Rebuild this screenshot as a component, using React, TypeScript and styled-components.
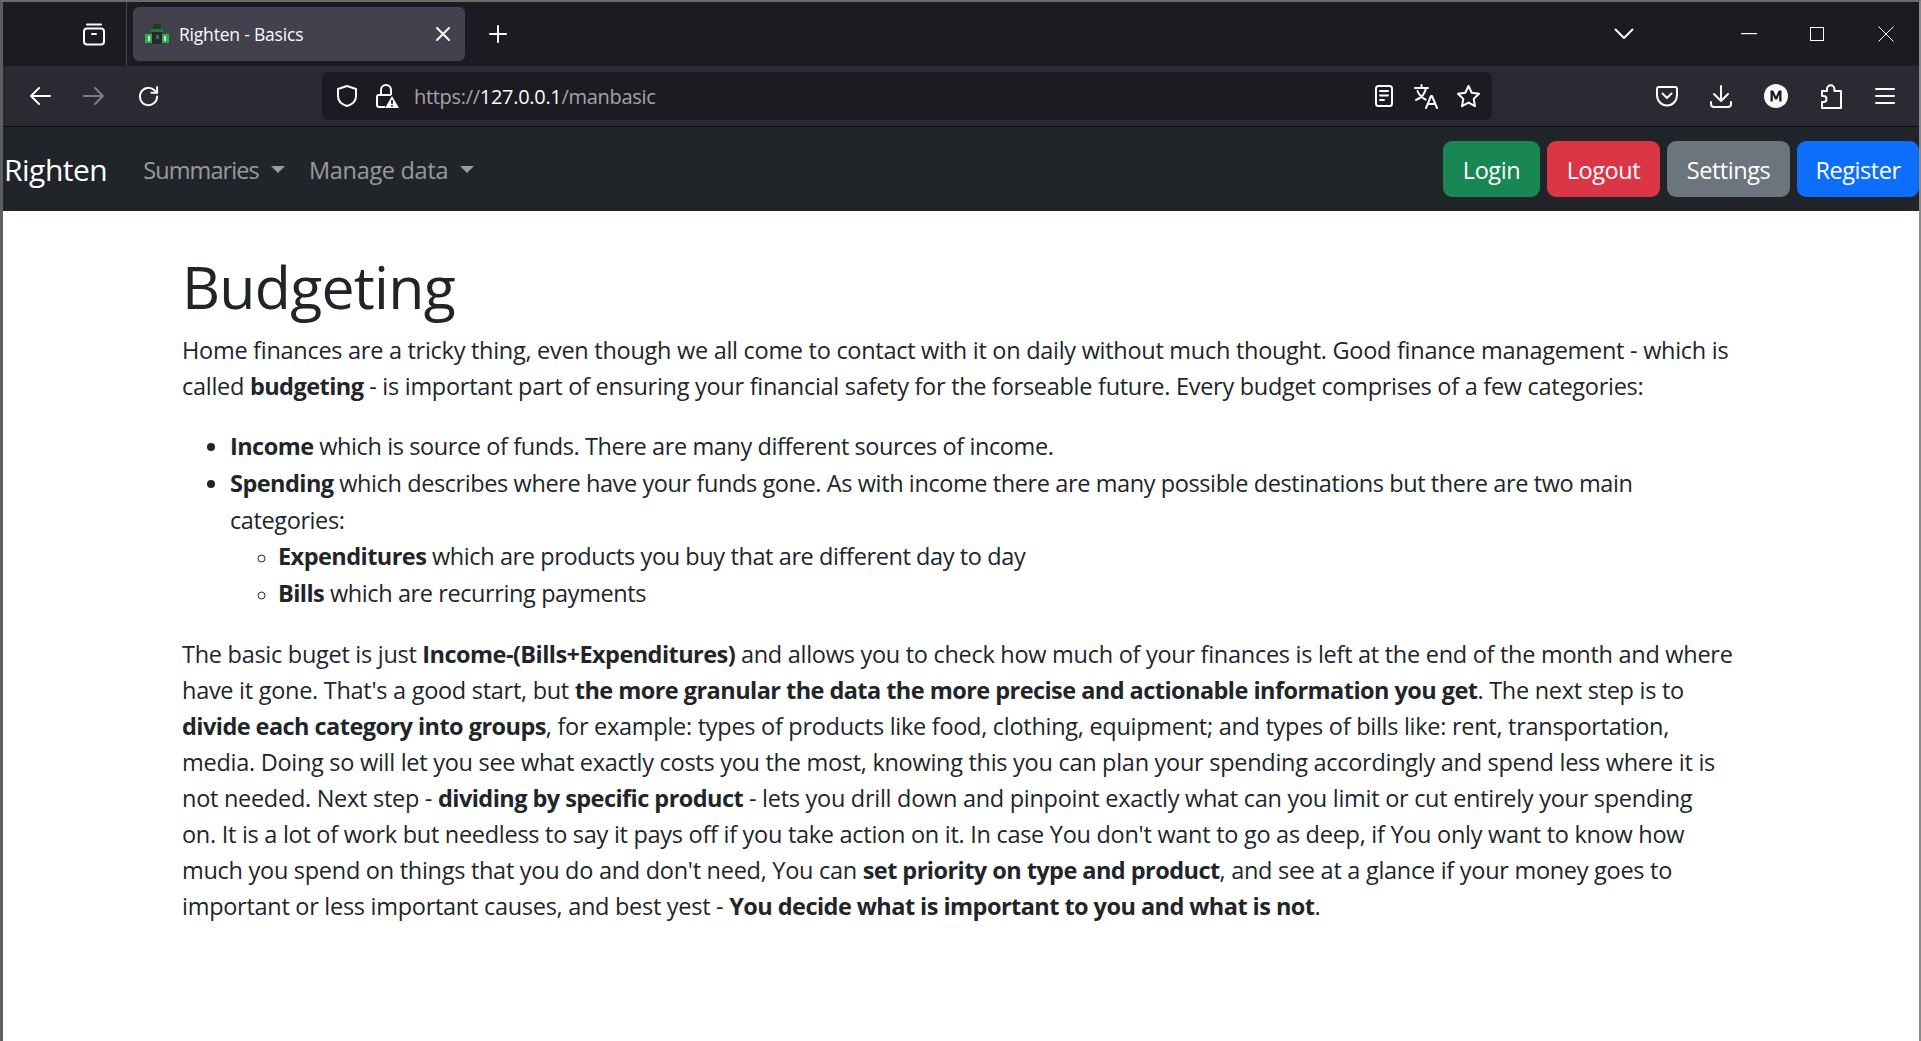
import React from 'react';
import styled, { createGlobalStyle } from 'styled-components';

const GlobalStyle = createGlobalStyle`
    html, body {
        margin: 0;
        padding: 0;
        background: #fff;
    }
    body {
        font-family: "Open Sans", "Noto Sans", sans-serif;
        color: #212529;
    }
`;

const Janela = styled.div`
    width: 1921px;
    height: 1041px;
    overflow: hidden;
    box-sizing: border-box;
    border-top: 2px solid #6b6b6b;
    border-left: 3px solid #5f5f5f;
    border-right: 2px solid #8a8a8a;
    display: flex;
    flex-direction: column;
`;

const BarraAbas = styled.div`
    height: 64px;
    flex: none;
    background: #1c1b22;
    display: flex;
    align-items: center;
    color: #fbfbfe;
`;

const Slot = styled.div<{ $w: number; $ml?: number }>`
    width: ${p => p.$w}px;
    margin-left: ${p => p.$ml ?? 0}px;
    flex: none;
    display: flex;
    align-items: center;
    justify-content: center;
    color: #fbfbfe;
`;

const Separador = styled.div`
    width: 1px;
    align-self: stretch;
    background: #4a4950;
    margin-left: 20px;
`;

const Aba = styled.div`
    width: 332px;
    height: 54px;
    margin-left: 6px;
    box-sizing: border-box;
    padding: 0 15px 0 11px;
    background: #42414d;
    border-radius: 6px;
    display: flex;
    align-items: center;
    flex: none;
`;

const TituloAba = styled.span`
    font-size: 17.5px;
    letter-spacing: -0.2px;
    margin-left: 9px;
    flex: 1;
`;

const BarraFerramentas = styled.div`
    height: 60px;
    flex: none;
    background: #2b2a33;
    border-bottom: 1px solid #0c0c0d;
    display: flex;
    align-items: center;
`;

const CampoUrl = styled.div`
    width: 1170px;
    height: 48px;
    margin-left: 162px;
    padding-right: 11px;
    box-sizing: border-box;
    flex: none;
    background: #1c1b22;
    border-radius: 6px;
    display: flex;
    align-items: center;
`;

const TextoUrl = styled.div`
    font-size: 20px;
    letter-spacing: -0.3px;
    color: #a4a3a9;
    margin-left: 15px;
    padding-top: 1px;
    flex: 1;

    b {
        font-weight: 400;
        color: #fbfbfe;
    }
`;

const Navbar = styled.nav`
    height: 84px;
    flex: none;
    background: #212529;
    display: flex;
    align-items: center;
`;

const Marca = styled.a`
    font-size: 30px;
    letter-spacing: -0.5px;
    color: #fff;
    margin-left: 1px;
`;

const Menu = styled.a<{ $ml: number; $ls: number }>`
    font-size: 23.5px;
    letter-spacing: ${p => p.$ls}px;
    color: rgba(255, 255, 255, 0.55);
    margin-left: ${p => p.$ml}px;
    padding-top: 2px;
    display: flex;
    align-items: center;

    &::after {
        content: '';
        margin-left: 12px;
        margin-top: -2px;
        border-top: 7px solid rgba(255, 255, 255, 0.55);
        border-left: 7px solid transparent;
        border-right: 7px solid transparent;
    }
`;

const Botoes = styled.div`
    margin-left: auto;
    display: flex;
    gap: 7px;
`;

const cores = { login: '#198754', logout: '#dc3545', settings: '#6c757d', register: '#0d6efd' };

const Botao = styled.button<{ $cor: keyof typeof cores; $w: number }>`
    width: ${p => p.$w}px;
    height: 56px;
    border: 0;
    padding: 2px 0 0;
    border-radius: 9px;
    background: ${p => cores[p.$cor]};
    color: #fff;
    font-family: inherit;
    font-size: 23.5px;
    letter-spacing: -0.45px;
`;

const Conteudo = styled.main`
    width: 1565px;
    margin-left: 179px;
    padding-top: 39px;
    font-size: 23.5px;
    line-height: 36px;
    letter-spacing: -0.28px;

    b {
        font-weight: 700;
        letter-spacing: -0.55px;
    }
`;

const Titulo = styled.h1`
    font-size: 59px;
    font-weight: 400;
    line-height: 72px;
    letter-spacing: -0.75px;
    margin: 0 0 10px;
`;

const Paragrafo = styled.p`
    margin: 0 0 24px;
`;

const Lista = styled.ul`
    margin: 0 0 24px;
    padding-left: 48px;
    line-height: 36.8px;
    letter-spacing: -0.4px;

    ul {
        margin: 0;
        padding-left: 48px;
    }

    ul li::marker {
        font-size: 19px;
    }
`;

const Ic = styled.svg`
    display: block;
    fill: none;
    stroke: currentColor;
    stroke-width: 2;
    stroke-linecap: round;
    stroke-linejoin: round;
`;

const Favicon = () => (
    <svg width="26" height="20" viewBox="0 0 26 20">
        <rect x="9" y="0" width="8" height="5" fill="#2b3230" />
        <rect x="7" y="5" width="12" height="3" fill="#1f7a3a" />
        <rect x="8" y="8" width="10" height="12" fill="#26292b" />
        <rect x="1" y="10" width="7" height="9" fill="#2fae4b" />
        <rect x="18" y="10" width="7" height="9" fill="#2fae4b" />
        <rect x="4" y="12" width="2" height="5" fill="#c8e8cf" />
        <rect x="20" y="12" width="2" height="5" fill="#c8e8cf" />
        <rect x="12" y="11" width="3" height="4" fill="#5a5f5c" />
    </svg>
);

const App: React.FC = () => {
    return (
        <Janela>
            <GlobalStyle />
            <BarraAbas>
                <Slot $w={24} $ml={79}>
                    <Ic width="24" height="24" viewBox="0 0 24 24">
                        <path d="M5 2.5h14" />
                        <rect x="2" y="6.5" width="20" height="16" rx="3" />
                        <path d="M10 12h4" />
                    </Ic>
                </Slot>
                <Separador />
                <Aba>
                    <Favicon />
                    <TituloAba>Righten - Basics</TituloAba>
                    <Ic width="14" height="14" viewBox="0 0 14 14" strokeWidth="1.6">
                        <path d="M1 1l12 12M13 1L1 13" />
                    </Ic>
                </Aba>
                <Slot $w={20} $ml={23}>
                    <Ic width="20" height="20" viewBox="0 0 20 20">
                        <path d="M10 2v16M2 10h16" />
                    </Ic>
                </Slot>
                <Slot $w={20} $ml={1106}>
                    <Ic width="20" height="12" viewBox="0 0 20 12">
                        <path d="M1.5 1.5L10 10l8.5-8.5" />
                    </Ic>
                </Slot>
                <Slot $w={16} $ml={107}>
                    <svg width="16" height="2" viewBox="0 0 16 2"><rect width="16" height="1.2" fill="#fbfbfe" /></svg>
                </Slot>
                <Slot $w={14} $ml={53}>
                    <svg width="14" height="14" viewBox="0 0 14 14"><rect x=".5" y=".5" width="13" height="13" fill="none" stroke="#fbfbfe" /></svg>
                </Slot>
                <Slot $w={16} $ml={54}>
                    <svg width="16" height="16" viewBox="0 0 16 16"><path d="M.5.5l15 15M15.5.5l-15 15" stroke="#fbfbfe" fill="none" /></svg>
                </Slot>
            </BarraAbas>
            <BarraFerramentas>
                <Slot $w={24} $ml={25}>
                    <Ic width="22" height="20" viewBox="0 0 22 20">
                        <path d="M21 10H2M10 2l-8 8 8 8" />
                    </Ic>
                </Slot>
                <Slot $w={24} $ml={30}>
                    <Ic width="22" height="20" viewBox="0 0 22 20" style={{ opacity: 0.4 }}>
                        <path d="M1 10h19M12 2l8 8-8 8" />
                    </Ic>
                </Slot>
                <Slot $w={24} $ml={30}>
                    <Ic width="23" height="23" viewBox="0 0 24 24">
                        <path d="M21 12a9 9 0 1 1-3-6.7L21 8" />
                        <path d="M21 2v6h-6" />
                    </Ic>
                </Slot>
                <CampoUrl>
                    <Slot $w={24} $ml={13}>
                        <Ic width="22" height="24" viewBox="0 0 22 24">
                            <path d="M11 2l9 3v7c0 5-4 8.5-9 10-5-1.500-9-5-9-10V5z" />
                        </Ic>
                    </Slot>
                    <Slot $w={24} $ml={16}>
                        <svg width="24" height="26" viewBox="0 0 24 26">
                            <path d="M6 12V7a5 5 0 0 1 10 0v5" fill="none" stroke="#fbfbfe" strokeWidth="2" />
                            <path d="M10 24H4a2 2 0 0 1-2-2v-8a2 2 0 0 1 2-2h12" fill="none" stroke="#fbfbfe" strokeWidth="2" />
                            <path d="M17 13l7 12H10z" fill="#fbfbfe" />
                            <rect x="16.200" y="17" width="1.600" height="4" fill="#1c1b22" />
                            <rect x="16.200" y="22" width="1.600" height="1.600" fill="#1c1b22" />
                        </svg>
                    </Slot>
                    <TextoUrl>https://<b>127.0.0.1</b>/manbasic</TextoUrl>
                    <Slot $w={20}>
                        <Ic width="18" height="22" viewBox="0 0 18 22">
                            <rect x="1" y="1" width="16" height="20" rx="2.500" />
                            <path d="M5 6h8M5 10.500h8M5 15h4" />
                        </Ic>
                    </Slot>
                    <Slot $w={26} $ml={19}>
                        <Ic width="25" height="25" viewBox="0 0 25 25">
                            <path d="M1 4h13M7.500 1v3M12 4c-1 6-5 10-10 12M3.500 7c1.500 4 5 7 8 8.500" />
                            <path d="M12 24l5-12h1l5 12M14 20h7" />
                        </Ic>
                    </Slot>
                    <Slot $w={25} $ml={17}>
                        <Ic width="25" height="24" viewBox="0 0 25 24">
                            <path d="M12.500 2l3.200 6.800 7.300 1-5.300 5.100 1.300 7.300-6.500-3.600-6.500 3.600 1.300-7.300L2 9.800l7.300-1z" />
                        </Ic>
                    </Slot>
                </CampoUrl>
                <Slot $w={22} $ml={164}>
                    <Ic width="22" height="22" viewBox="0 0 22 22">
                        <path d="M3 2h16a2 2 0 0 1 2 2v6c0 6-4.500 10.500-10 10.500S1 16 1 10V4a2 2 0 0 1 2-2z" />
                        <path d="M6.500 8.500L11 13l4.500-4.500" />
                    </Ic>
                </Slot>
                <Slot $w={22} $ml={32}>
                    <Ic width="22" height="24" viewBox="0 0 22 24">
                        <path d="M11 2v15M4 10l7 7 7-7M1 18v2a3 3 0 0 0 3 3h14a3 3 0 0 0 3-3v-2" />
                    </Ic>
                </Slot>
                <Slot $w={24} $ml={32}>
                    <svg width="24" height="24" viewBox="0 0 24 24">
                        <circle cx="12" cy="12" r="12" fill="#fbfbfe" />
                        <path d="M6.500 17.500v-11h2.800L12 12.500l2.700-6h2.800v11h-2.300v-6.700L13 15.500h-2l-2.200-4.700v6.700z" fill="#1c1b22" />
                    </svg>
                </Slot>
                <Slot $w={22} $ml={32}>
                    <Ic width="22" height="25" viewBox="0 0 22 25">
                        <path d="M7 7V5a3.700 3.700 0 0 1 7.400 0v2H21v17H2v-6h1.500a3 3 0 0 0 0-6H2V7z" />
                    </Ic>
                </Slot>
                <Slot $w={20} $ml={33}>
                    <Ic width="20" height="18" viewBox="0 0 20 18">
                        <path d="M1 2h18M1 9h18M1 16h18" />
                    </Ic>
                </Slot>
            </BarraFerramentas>
            <Navbar>
                <Marca>Righten</Marca>
                <Menu $ml={36} $ls={-0.9}>Summaries</Menu>
                <Menu $ml={24} $ls={-0.3}>Manage data</Menu>
                <Botoes>
                    <Botao $cor="login" $w={97}>Login</Botao>
                    <Botao $cor="logout" $w={113}>Logout</Botao>
                    <Botao $cor="settings" $w={123}>Settings</Botao>
                    <Botao $cor="register" $w={122}>Register</Botao>
                </Botoes>
            </Navbar>
            <Conteudo>
                <Titulo>Budgeting</Titulo>
                <Paragrafo>
                    Home finances are a tricky thing, even though we all come to contact with it on daily without much thought. Good finance management - which is<br />
                    called <b>budgeting</b> - is important part of ensuring your financial safety for the forseable future. Every budget comprises of a few categories:
                </Paragrafo>
                <Lista>
                    <li><b>Income</b> which is source of funds. There are many different sources of income.</li>
                    <li>
                        <b>Spending</b> which describes where have your funds gone. As with income there are many possible destinations but there are two main<br />
                        categories:
                        <ul>
                            <li><b>Expenditures</b> which are products you buy that are different day to day</li>
                            <li><b>Bills</b> which are recurring payments</li>
                        </ul>
                    </li>
                </Lista>
                <Paragrafo>
                    The basic buget is just <b>Income-(Bills+Expenditures)</b> and allows you to check how much of your finances is left at the end of the month and where<br />
                    have it gone. That's a good start, but <b>the more granular the data the more precise and actionable information you get</b>. The next step is to<br />
                    <b>divide each category into groups</b>, for example: types of products like food, clothing, equipment; and types of bills like: rent, transportation,<br />
                    media. Doing so will let you see what exactly costs you the most, knowing this you can plan your spending accordingly and spend less where it is<br />
                    not needed. Next step - <b>dividing by specific product</b> - lets you drill down and pinpoint exactly what can you limit or cut entirely your spending<br />
                    on. It is a lot of work but needless to say it pays off if you take action on it. In case You don't want to go as deep, if You only want to know how<br />
                    much you spend on things that you do and don't need, You can <b>set priority on type and product</b>, and see at a glance if your money goes to<br />
                    important or less important causes, and best yest - <b>You decide what is important to you and what is not</b>.
                </Paragrafo>
            </Conteudo>
        </Janela>
    );
};

export default App;
